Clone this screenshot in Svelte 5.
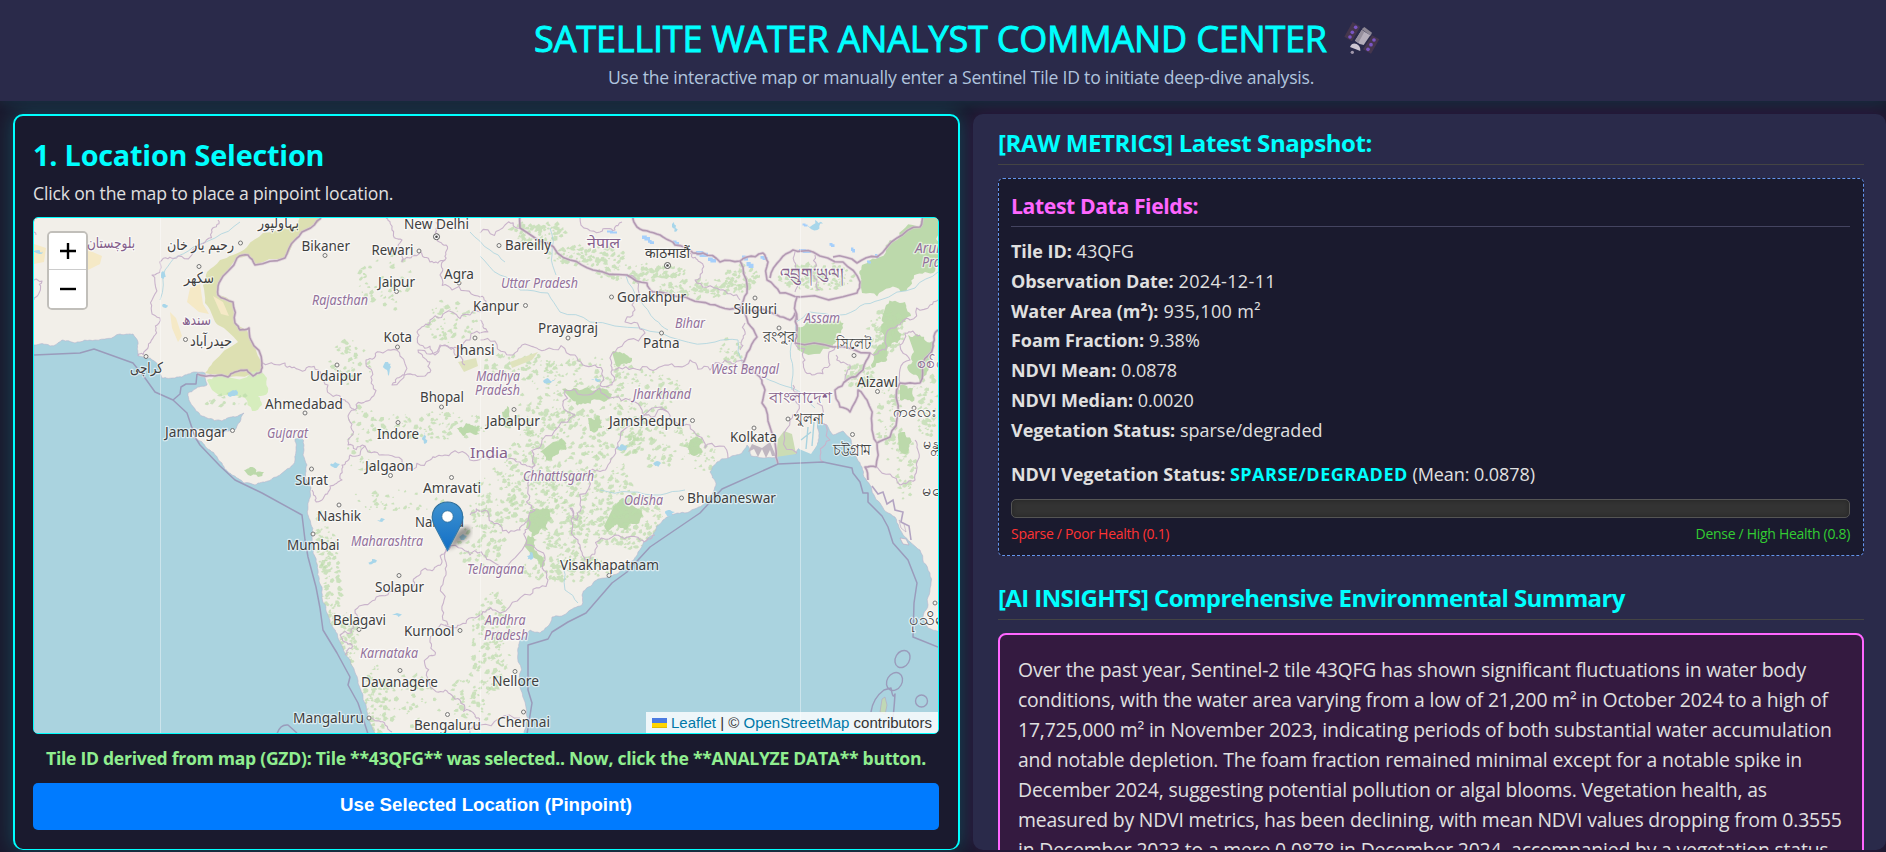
<script>
  const fields = [
    { label: 'Tile ID', value: '43QFG', ls: 0.1 },
    { label: 'Observation Date', value: '2024-12-11', ls: 0.35 },
    { label: 'Water Area (m²)', value: '935,100 m²', ls: 0.35 },
    { label: 'Foam Fraction', value: '9.38%', ls: 0.1 },
    { label: 'NDVI Mean', value: '0.0878', ls: 0 },
    { label: 'NDVI Median', value: '0.0020', ls: 0 },
    { label: 'Vegetation Status', value: 'sparse/degraded', ls: 0 },
  ]

  const summary = [
    'Over the past year, Sentinel-2 tile 43QFG has shown significant fluctuations in water body',
    'conditions, with the water area varying from a low of 21,200 m² in October 2024 to a high of',
    '17,725,000 m² in November 2023, indicating periods of both substantial water accumulation',
    'and notable depletion. The foam fraction remained minimal except for a notable spike in',
    'December 2024, suggesting potential pollution or algal blooms. Vegetation health, as',
    'measured by NDVI metrics, has been declining, with mean NDVI values dropping from 0.3555',
    'in December 2023 to a mere 0.0878 in December 2024, accompanied by a vegetation status',
  ]

  // name, left, right, baseline, dot x, dot y
  const cities = [
    ['New Delhi', 404, 469, 229],
    ['Bikaner', 301.5, 350, 251, 325, 255.5],
    ['Rewari', 371.5, 413.5, 255, 419, 251],
    ['Jaipur', 378, 415, 287, 396.5, 291.5],
    ['Agra', 444, 474, 279, 459, 283],
    ['Kota', 383.5, 412, 342, 397.5, 347],
    ['رحیم یار خان', 167, 234, 250, 240.5, 243],
    ['سکھر', 184, 214, 283, 199, 266.5],
    ['حیدرآباد', 190, 232, 346, 185.5, 339.5],
    ['بہاولپور', 258, 299, 228],
    ['کراچی', 130, 163, 373, 146, 356.5],
    ['Kanpur', 473, 519, 310.5, 525.5, 305.5],
    ['Jhansi', 456, 494.5, 355, 475, 338],
    ['Bareilly', 505, 551, 250, 499, 245.5],
    ['काठमाडौं', 645, 690, 258],
    ['Gorakhpur', 617, 686, 302, 611.5, 297],
    ['Siliguri', 733.5, 777, 313.5, 755, 298],
    ['Prayagraj', 538, 598, 333, 568, 338],
    ['রংপুর', 763, 795, 342, 779, 328],
    ['সিলেট', 836, 871, 349, 854, 355.5],
    ['Patna', 643, 679.5, 348, 661.5, 333],
    ['Aizawl', 857, 898, 386.5, 877.5, 391.5],
    ['খুলনা', 794, 824, 424, 788, 419],
    ['Jabalpur', 486, 540, 426, 514, 409.5],
    ['Jamshedpur', 609, 687, 426, 692.5, 420.5],
    ['Kolkata', 730, 777, 442, 754, 428],
    ['চট্টগ্রাম', 833, 871, 455, 852.5, 434.5],
    ['ကလေး', 893, 936, 417, 914, 408],
    ['မန္တလေး', 923, 966, 449],
    ['မကွေး', 922, 962, 496],
    ['ပုသိမ်', 909, 945, 625, 935, 603],
    ['Udaipur', 310, 362, 381, 337, 365],
    ['Ahmedabad', 265, 343, 409, 305, 413],
    ['Bhopal', 420, 464, 402, 441.5, 407],
    ['Jamnagar', 165, 227, 437, 232.5, 430.5],
    ['Indore', 377, 419, 439, 398, 422.5],
    ['Jalgaon', 365, 413.5, 471, 390.5, 475.5],
    ['Surat', 295, 328, 485, 311.5, 469],
    ['Amravati', 423, 481, 493, 451.5, 477.5],
    ['Nashik', 317, 361, 520.5, 339, 505],
    ['Nanded', 415, 464, 527],
    ['Mumbai', 287, 339.5, 550, 313, 534],
    ['Solapur', 375, 424, 592, 399, 575.5],
    ['Bhubaneswar', 687, 776, 503, 681.5, 498],
    ['Visakhapatnam', 560, 659, 570, 609, 575.5],
    ['Nellore', 492, 539, 686, 515, 671.5],
    ['Chennai', 497, 550, 727, 523.5, 712],
    ['Belagavi', 333, 386, 625, 359, 629.5],
    ['Kurnool', 404, 454.5, 635.5, 460, 630.5],
    ['Davanagere', 361, 438, 686.5, 400, 670.5],
    ['Mangaluru', 293, 364, 723, 369, 718],
    ['Bengaluru', 414, 481, 730, 447.5, 714.5],
  ]

  const capitals = [[436.5, 236.7], [667.5, 265.5]]

  const states = [
    ['Rajasthan', 312, 368, 305],
    ['Uttar Pradesh', 501, 578, 288],
    ['Bihar', 675, 705, 328],
    ['Assam', 804, 840, 323],
    ['West Bengal', 711, 779, 374],
    ['Madhya', 476, 520, 381],
    ['Pradesh', 475, 520, 395],
    ['Jharkhand', 633, 691, 399],
    ['Gujarat', 267, 308, 438],
    ['Maharashtra', 351, 423, 546],
    ['Telangana', 467, 524, 574],
    ['Chhattisgarh', 523, 594, 481],
    ['Odisha', 624, 663, 505],
    ['Andhra', 485, 525.5, 625],
    ['Pradesh', 484, 528, 640],
    ['Karnataka', 360, 418, 658],
    ['Arunachal', 915, 978, 253],
    ['Pradesh', 922, 967, 267],
  ]

  const regions = [
    ['بلوچستان', 87, 135, 248],
    ['سندھ', 182, 211, 325],
    ['नेपाल', 587, 620, 248],
    ['འབྲུག་ཡུལ།', 780, 843, 279],
    ['বাংলাদেশ', 769, 832, 403],
    ['India', 470, 508, 458],
    ['စစ်ကိုင်း', 917, 965, 368],
  ]

  let seed = 7
  function rnd() {
    seed = (seed * 16807) % 2147483647
    return seed / 2147483647
  }

  // splits every segment a few times and pushes the midpoints sideways
  function rough(str, amp = 0.16, depth = 3, close = false) {
    let pts = str.split(' ').map((p) => p.split(',').map(Number))
    for (let d = 0; d < depth; d++) {
      const out = []
      for (let i = 0; i < pts.length - 1; i++) {
        const [x1, y1] = pts[i]
        const [x2, y2] = pts[i + 1]
        const len = Math.hypot(x2 - x1, y2 - y1)
        out.push(pts[i])
        if (len > 3) {
          const k = (rnd() - 0.5) * 2 * amp
          out.push([(x1 + x2) / 2 - (y2 - y1) * k, (y1 + y2) / 2 + (x2 - x1) * k])
        }
      }
      out.push(pts[pts.length - 1])
      pts = out
    }
    return 'M' + pts.map(([x, y]) => x.toFixed(1) + ' ' + y.toFixed(1)).join('L') + (close ? 'Z' : '')
  }

  const westCoast = '34,345 50,346 62,340 75,343 95,340 120,334 133,334 138,342 138,356 150,358 160,365 162,378 175,378 188,374 196,372 205,373 207,385 195,389 188,393 190,402 196,411 207,418 222,421 235,417 244,413 240,422 235,430 222,433 205,430 188,431 198,440 210,450 222,463 232,475 244,483 255,485 268,481 281,474 290,468 295,460 296,447 295,439 301,436 304,445 303,455 307,465 305,478 311,488 308,503 310,520 312,537 313,553 318,570 322,587 326,607 330,623 338,638 345,653 353,667 358,683 363,697 368,717 376,736'
  const eastCoast = '524,736 525,702 520,687 518,653 520,640 530,630 540,633 547,627 552,617 567,613 582,605 582,595 593,583 608,577 627,565 638,552 653,535 663,520 677,513 697,508 708,498 716,483 710,472 717,462 728,458 742,453 747,445 751,456 763,458 776,457 782,452 796,454 800,447 813,451 819,438 817,420 827,425 833,435 843,431 850,438 853,450 862,467 870,485 880,503 895,517 905,537 920,550 930,573 928,597 923,617 928,628 940,632'
  const seas = [
    rough(westCoast, 0.12) + 'L34 736Z',
    rough(eastCoast, 0.12) + 'L940 736Z',
  ]

  const desert = rough('322,218 302,232 295,240 285,258 255,265 248,255 237,258 218,285 218,295 233,302 235,323 247,330 262,363 261,372 228,377 205,373 213,362 238,342 218,325 213,317 205,303 203,285 207,272 220,260 233,255 247,247 263,233 297,225 300,216', 0.08, 2, true)
  const marsh = rough('207,380 215,376 232,378 260,371 267,378 268,392 258,396 262,405 252,411 245,398 232,393 222,396 212,390', 0.2, 2, true)

  const forests = [
    '860,282 862,265 880,257 897,240 920,228 925,216 940,216 940,262 925,272 910,286 890,288 862,293',
    '797,327 806,323 822,325 840,320 843,328 836,335 833,346 797,343',
    '562,389 585,388 605,389 612,394 604,402 585,404 572,400',
    '612,352 624,353 632,358 630,363 616,366',
    '908,335 920,335 934,341 932,350 930,365 920,383 908,370 914,352',
    '900,385 916,386 912,402 900,400',
    '886,305 905,302 911,316 898,325 902,334 888,347 883,362 872,368 878,346 884,335 882,318',
    '530,510 543,508 552,518 548,530 540,530 532,540 526,528',
    '614,506 622,498 636,508 643,516 634,524 625,530 617,524 608,532 604,526',
    '528,535 537,540 539,555 545,564 540,568 530,555 524,546',
    '457,428 466,423 480,426 478,434 463,436',
    '690,440 702,438 703,452 694,456 688,448',
    '553,442 562,438 566,450 556,455 546,460 540,452',
    '502,412 507,406 513,420 511,428 504,426',
    '898,437 905,432 911,440 908,453 899,450',
    '588,418 600,416 602,428 590,431',
    '244,470 250,467 264,472 258,477 248,475',
  ].map((p) => rough(p, 0.28, 3, true))

  // cx, cy, rx, ry, count
  const clusters = [
    [535, 232, 28, 12, 90], [585, 255, 40, 10, 90], [640, 272, 45, 9, 110], [700, 288, 45, 9, 100],
    [815, 276, 38, 14, 150], [740, 275, 18, 14, 50], [885, 330, 18, 22, 90], [858, 375, 16, 12, 60],
    [450, 320, 25, 22, 60], [385, 280, 28, 30, 50], [350, 360, 22, 24, 45], [430, 425, 60, 14, 90],
    [520, 365, 40, 12, 60], [580, 375, 60, 18, 90], [640, 390, 40, 22, 90], [545, 410, 30, 30, 90],
    [600, 430, 55, 28, 160], [530, 480, 28, 50, 200], [590, 490, 45, 40, 200], [625, 520, 40, 28, 190],
    [565, 530, 25, 28, 100], [565, 568, 45, 14, 110], [490, 500, 22, 32, 90], [480, 545, 25, 22, 60],
    [660, 445, 40, 22, 90], [700, 450, 18, 20, 40], [395, 500, 50, 12, 35], [330, 580, 9, 50, 90],
    [348, 640, 9, 30, 80], [375, 700, 12, 36, 110], [410, 700, 30, 26, 50], [490, 640, 20, 50, 140],
    [470, 700, 22, 28, 60], [320, 540, 8, 30, 40], [888, 420, 12, 40, 70], [925, 400, 10, 40, 60],
    [905, 470, 10, 30, 40], [360, 440, 15, 40, 40], [225, 400, 22, 9, 14], [730, 350, 12, 14, 30],
  ]
  const speckles = clusters.map(([cx, cy, rx, ry, n]) => {
    let d = ''
    for (let i = 0; i < n; i++) {
      const a = rnd() * 6.283
      const r = Math.sqrt(rnd())
      const x = cx + Math.cos(a) * rx * r
      const y = cy + Math.sin(a) * ry * r
      const s = 0.8 + rnd() * 2.3
      d += `M${x.toFixed(1)} ${y.toFixed(1)}l${s.toFixed(1)} ${(-s * rnd()).toFixed(1)}l${(s * rnd()).toFixed(1)} ${s.toFixed(1)}l${(-s * 0.8).toFixed(1)} ${(s * rnd()).toFixed(1)}l${(-s).toFixed(1)} ${(-s * 0.3).toFixed(1)}z`
    }
    return d
  })

  const rivers = [
    '480,256 500,275 520,290 548,293 560,312 590,322 640,328 680,340 715,342 738,340 742,362',
    '626,276 640,300 655,320 668,330',
    '938,272 915,288 880,300 860,306 840,315 810,312 796,322 791,345 793,370 792,390',
    '550,228 552,255 556,275',
    '160,300 165,270 178,256 198,245 215,238 240,222',
    '765,378 785,386 800,392 815,408',
    '560,560 565,590 578,603', '600,490 630,492 660,495 685,490',
    '470,232 490,250 505,262',
  ].map((p) => rough(p, 0.1, 2))

  const lakes = [
    [163, 275, 2, 4], [165, 306, 3, 2], [388, 369, 3, 7], [424, 438, 2, 6], [335, 465, 5, 3], [381, 520, 4, 2],
    [622, 447, 6, 3], [657, 464, 4, 3], [670, 513, 5, 3], [549, 381, 6, 2], [596, 380, 5, 2], [674, 227, 2, 5],
    [815, 225, 8, 5], [372, 561, 5, 2], [397, 615, 5, 2], [463, 537, 4, 3], [233, 393, 5, 3], [530, 556, 3, 4], [38, 252, 5, 2],
  ]
  const glaciers = [
    [612, 232, 10, 3], [646, 238, 8, 5], [651, 242, 6, 4], [676, 243, 6, 5], [702, 254, 12, 6], [712, 260, 8, 5],
    [745, 258, 6, 5], [750, 265, 7, 6], [764, 258, 7, 4], [805, 251, 12, 4], [805, 225, 5, 3], [832, 245, 5, 4],
    [853, 250, 4, 5], [869, 262, 4, 3], [877, 256, 4, 4],
  ]

  const stateLines = [
    '198,245 178,256 162,260 152,275 152,300 160,318 155,335 146,350 138,356',
    '198,245 212,232 218,220', '34,280 42,281 38,295 34,300', '34,232 36,235',
    '386,218 392,230 402,240 402,262 412,256 420,252 430,262 445,260 446,245 438,235 436,222',
    '445,260 440,275 452,290 478,296 488,306 470,315 452,312 430,320 417,332 420,345 435,355 445,345 470,340 488,332 480,320',
    '263,363 285,363 300,370 318,370 328,385 345,400 355,410 352,430 348,445 365,446 350,455 342,465 342,480 330,486 322,500 315,500 312,490',
    '355,410 370,400 372,380 366,360 380,352 400,356 392,385 405,375 425,376 430,362 418,350 440,345 455,355 465,365',
    '480,340 505,352 522,345 545,350 575,355 595,365 600,385 612,385 612,370 615,352 645,333 625,322 632,305 627,276',
    '612,370 640,370 665,365 690,360 710,370 725,360 745,362',
    '365,446 385,455 405,470 430,460 445,455 470,460 495,455 520,462 535,465 542,440 575,415 565,390 600,388',
    '600,388 630,400 645,415 668,412 690,425 705,448 728,458',
    '668,412 620,440 608,465 590,470 580,505 577,520 570,508 578,540 585,560 595,550 615,535 640,540 655,535',
    '535,465 528,490 535,510 525,530 525,545 545,560 548,580 530,595 495,610 480,615 460,625 445,625',
    '448,550 442,562 430,570 415,578 412,590 395,592 375,600 355,610 355,622 340,635 352,645 345,655',
    '448,550 446,575 444,600 448,625 430,640 435,655 425,665 430,685 445,690 460,700 475,715 480,725 520,718',
    '470,515 485,510 500,525 520,530 528,520', '445,550 470,555 490,560 525,545',
    '372,718 385,725 392,732', '480,725 470,733',
    '690,253 700,262 695,280 720,290 740,300', '745,323 742,340 740,350', '580,218 600,232 615,230 622,222',
    '480,233 505,225 520,228', '795,343 805,360 812,375 830,365 835,347', '870,353 885,350 898,325 910,320 930,305 938,300',
    '900,383 910,360 900,345 905,333 920,335', '845,380 850,365 836,355', '793,385 795,400 790,420 797,453',
    '817,403 830,440 823,462', '877,467 900,485 915,480 918,460 915,440', '815,255 812,275 820,290', '795,252 800,275 795,292',
  ].map((p) => rough(p, 0.3))

  const borders = [
    '322,216 317,221 302,232 295,240 285,258 255,265 248,255 237,258 219,283 218,295 233,302 235,323 240,330 249,328 251,340 262,363 261,372 253,376 247,370 235,372 228,377 215,376 197,374',
    '633,216 637,227 650,232 663,237 675,245 693,253 703,253 720,262 740,261 747,257 763,253 768,262 767,280 780,293 800,297 857,293 860,282 843,262 813,252 793,250 780,260 770,278',
    '833,257 857,263 877,257 897,238 920,227 923,216',
    '520,216 520,228 547,243 570,260 593,270 627,275 647,283 653,292 680,297 700,302 720,307 740,308 747,293 743,267 740,261',
    '740,308 748,323 757,337 747,353 743,367 760,377 765,390 762,403 770,427 776,450 778,464',
    '748,310 777,315 790,320 795,313 797,330 795,343 833,347 870,353 863,370 847,380 835,390 840,407 850,412 858,390 867,400 872,425 877,443 876,467 865,467 868,480',
    '877,443 890,437 898,413 900,383 920,383 923,363 933,347 935,333 938,330',
    '797,297 797,320',
  ].map((p) => rough(p, 0.12, 2))

  const maritime = [
    'M34 355L80 353L94 349L133 363L145 378L155 392L173 400L187 413L195 437L200 445L220 466L235 480L262 493L302 515L305 540L308 557L316 587L320 608L323 630L337 653L350 677L348 685L358 703L361 712L368 734',
    'M173 400L180 394L181 387L186 384L196 384L197 374',
    'M277 734Q280 724 288 725L297 733',
    'M527 734L532 703L528 690L528 645L548 639L552 632L568 622L586 613L612 583L627 572L650 547L700 513L722 489L778 464L823 462L852 468L853 473L860 482L863 493L868 493L868 502L882 516L888 527L893 543L908 560L917 583L914 603L913 637L938 647',
    'M871 712Q873 698 884 690L891 688Q893 700 895 694Q894 712 891 734',
  ]
</script>

<div class="page">
  <header>
    <h1>
      <span>SATELLITE WATER ANALYST COMMAND CENTER</span>
      <svg width="38" height="36" viewBox="66 32 114 108" aria-hidden="true">
        <path fill="#45364d" d="M95 38l23 14-25 44-23-14zM153 78l22 12-25 43-24-13z" />
        <g fill="#7a55c4">
          <circle cx="104" cy="54" r="5.5" /><circle cx="94" cy="69" r="5.5" /><circle cx="87" cy="83" r="5.5" />
          <circle cx="159" cy="92" r="5.5" /><circle cx="150" cy="106" r="5.5" /><circle cx="141" cy="120" r="5.5" />
        </g>
        <path fill="#8d8794" d="M122 60l8-7 23 17-4 9z" />
        <path fill="#b5aebb" d="M122 62l26 16-20 29q-14-2-26-13z" />
        <path fill="#968f9d" d="M122 62l8 5-18 34-10-7z" />
        <path fill="#cdc6d1" d="M87 113q6-14 20-9 12 6 11 21z" />
        <circle cx="94" cy="129" r="5" fill="#a097ab" />
      </svg>
    </h1>
    <p>Use the interactive map or manually enter a Sentinel Tile ID to initiate deep-dive analysis.</p>
  </header>

  <main>
    <section class="panel location">
      <h2>1. Location Selection</h2>
      <p class="hint">Click on the map to place a pinpoint location.</p>

      <div class="map">
        <svg class="tiles" viewBox="34 218 904 515" preserveAspectRatio="none">
          <rect x="34" y="218" width="904" height="515" fill="#f2efe9" />
          <path d={desert} fill="#dde0b2" />
          <path d={marsh} fill="#d6edbd" />
          <g fill="#f5e9c6">
            <path d="M190 288l10-4 3 20 6 10-10-2-12-10zM88 250l14 6-2 8-12 6zM170 312l6 6 6 18-4 6-6-14z" />
            <path d="M213 296l10 6 6 14-8-2zM34 244l12 4-2 14-10 2z" />
          </g>
          {#each forests as d}
            <path {d} fill="#bcd9ab" />
          {/each}
          {#each speckles as d}
            <path {d} fill="#bbdba9" opacity="0.7" />
          {/each}
          <path d="M458 362l18-4 2 8-14 6zM510 362l28-10-6 8-20 8z" fill="#dfe3bd" />
          {#each rivers as d}
            <path {d} fill="none" stroke="#aad3df" stroke-width="1" opacity="0.8" />
          {/each}
          {#each seas as d}
            <path {d} fill="#aad3df" stroke="#b8b5cc" stroke-width="0.6" />
          {/each}
          <path d="M776 457l2-18 6-8 8 3 4 20z" fill="#cbdcb4" />
          <path d="M748 452l4-8 10 4 8-6 6 14-4 0-2-6-4 8-4-9-4 8-4-8z" fill="#bfb6c0" />
          <path d="M799 449l0-22 14-14 4 10 0 22-6 9z" fill="#f2efe9" />
          <path d="M806 449l2-22M812 446l2-24M801 440l10-8" stroke="#aad3df" stroke-width="1.4" fill="none" />
          <path d="M900 538l6 1 3 6-6-1zM899 520l5 4 2 8-5-4z" fill="#f2efe9" stroke="#b5a3c0" stroke-width="0.6" />
          <path d="M872 486l6 8 5-2 4 12 6-4 2 10 8 2-2 10 8 4 2 14" fill="none" stroke="#b3a4c2" stroke-width="1.6" />
          {#each lakes as [cx, cy, rx, ry]}
            <path d={rough(`${cx - rx},${cy} ${cx},${cy - ry} ${cx + rx},${cy - ry * 0.3} ${cx + rx * 0.3},${cy + ry} ${cx - rx},${cy}`, 0.4, 2, true)} fill="#a8d6ea" />
          {/each}
          {#each glaciers as [x, y, w, h]}
            <path d="M{x - w / 2} {y - h / 2}h{w * 0.6}v{h * 0.3}h{w * 0.4}v{h * 0.7}h{-w * 0.7}v{-h * 0.3}h{-w * 0.3}z" fill="#a5cffb" />
          {/each}
          <g fill="none" stroke-linejoin="round">
            {#each stateLines as d}
              <path {d} stroke="#c9b3cb" stroke-width="1.1" />
            {/each}
            {#each borders as d}
              <path {d} stroke="#d9c6d6" stroke-width="3.2" opacity="0.6" />
              <path {d} stroke="#b39ab3" stroke-width="1.6" />
            {/each}
            {#each maritime as d}
              <path {d} stroke="#9a9bbb" stroke-width="1.5" />
            {/each}
            <g stroke="#9a9bbb" stroke-width="1.4">
              <ellipse cx="902.5" cy="659" rx="7" ry="9" transform="rotate(30 902.5 659)" />
              <ellipse cx="894.5" cy="681.5" rx="7.5" ry="9.5" transform="rotate(30 894.5 681.5)" />
              <circle cx="921.5" cy="701" r="6" />
            </g>
          </g>
          <path d="M882 699l3-2 2 8-2 10-5-3z" fill="#c0d8b5" stroke="#b3a4c2" stroke-width="0.6" />
          <g stroke="#fff" stroke-width="1" opacity="0.4">
            <path d="M160.5 218v515M480.5 218v515M800.5 218v515" />
          </g>

          <g fill="#f7f5f1" stroke="#777" stroke-width="1">
            {#each cities as [, , , , x, y]}
              {#if x}
                <circle cx={x} cy={y} r="2" />
              {/if}
            {/each}
          </g>
          {#each capitals as [x, y]}
            <circle cx={x} cy={y} r="3" fill="#fff" stroke="#555" />
            <circle cx={x} cy={y} r="1.3" fill="#444" />
          {/each}
          {#each states as [name, x1, x2, y]}
            <text class="state" x={x1} {y} textLength={x2 - x1} lengthAdjust="spacingAndGlyphs">{name}</text>
          {/each}
          {#each regions as [name, x1, x2, y]}
            <text class="region" x={x1} {y} textLength={x2 - x1} lengthAdjust="spacingAndGlyphs">{name}</text>
          {/each}
          {#each cities as [name, x1, x2, y]}
            <text class="city" x={x1} {y} textLength={x2 - x1} lengthAdjust="spacingAndGlyphs">{name}</text>
          {/each}
        </svg>

        <svg class="marker" width="64" height="54" viewBox="0 0 64 54">
          <defs>
            <linearGradient id="pin" x1="0" y1="0" x2="0" y2="1">
              <stop offset="0" stop-color="#3f92cf" />
              <stop offset="1" stop-color="#126fc6" />
            </linearGradient>
            <linearGradient id="pinEdge" x1="0" y1="0" x2="0" y2="1">
              <stop offset="0" stop-color="#2e6c97" />
              <stop offset="1" stop-color="#3883b7" />
            </linearGradient>
            <filter id="soft"><feGaussianBlur stdDeviation="2" /></filter>
          </defs>
          <path d="M17 49L24 33Q31 24 38 26Q42 32 35 38Z" fill="#000" opacity="0.36" filter="url(#soft)" />
          <path
            d="M16.5 1C7.5 1 1.2 7.8 1.2 16C1.2 20.5 3 23.800 5 27.5L16.5 49.5L28 27.5C30 23.8 31.8 20.5 31.8 16C31.8 7.8 25.5 1 16.5 1Z"
            fill="url(#pin)"
            stroke="url(#pinEdge)"
            stroke-width="1.2"
          />
          <circle cx="16.5" cy="15.5" r="5.7" fill="#fff" stroke="#2e6c97" stroke-width="0.8" />
        </svg>

        <div class="zoom">
          <button type="button" aria-label="Zoom in">
            <svg width="18" height="18" viewBox="0 0 18 18"><path d="M1 9h16M9 1v16" stroke="#000" stroke-width="2.4" /></svg>
          </button>
          <button type="button" aria-label="Zoom out">
            <svg width="18" height="18" viewBox="0 0 18 18"><path d="M1 9h16" stroke="#000" stroke-width="2.4" /></svg>
          </button>
        </div>

        <div class="attribution">
          <svg width="15" height="10" viewBox="0 0 15 10">
            <path fill="#4c7be1" d="M0 0h15v5H0z" />
            <path fill="#ffd500" d="M0 5h15v4H0z" />
            <path fill="#e0bc00" d="M0 9h15v1H0z" />
          </svg>
          <span><a href="#leaflet">Leaflet</a> | © <a href="#osm">OpenStreetMap</a> contributors</span>
        </div>
      </div>

      <p class="status">Tile ID derived from map (GZD): Tile **43QFG** was selected.. Now, click the **ANALYZE DATA** button.</p>
      <button class="use" type="button">Use Selected Location (Pinpoint)</button>
    </section>

    <section class="panel results">
      <h3>[RAW METRICS] Latest Snapshot:</h3>
      <div class="metrics">
        <h4>Latest Data Fields:</h4>
        {#each fields as f}
          <p style:letter-spacing="{f.ls}px"><strong>{f.label}:</strong> {f.value}</p>
        {/each}
        <p class="ndvi"><strong>NDVI Vegetation Status: <span>SPARSE/DEGRADED</span></strong> (Mean: 0.0878)</p>
        <div class="bar"></div>
        <div class="scale">
          <span class="poor">Sparse / Poor Health (0.1)</span>
          <span class="dense">Dense / High Health (0.8)</span>
        </div>
      </div>

      <h3 class="ai">[AI INSIGHTS] Comprehensive Environmental Summary</h3>
      <div class="summary">
        {#each summary as line}
          <p>{line}</p>
        {/each}
      </div>
    </section>
  </main>
</div>

<style>
  :global(body) {
    margin: 0;
    background: #1a1a2e;
    overflow: hidden;
  }
  .page {
    display: flex;
    flex-direction: column;
    height: 852px;
    overflow: hidden;
    color: #e0e0e0;
    font-family: 'Open Sans', 'Noto Sans', sans-serif;
    font-size: 17.6px;
  }
  h1, h2, h3, h4, p {
    margin: 0;
  }
  header {
    position: relative;
    z-index: 2;
    box-sizing: border-box;
    flex: none;
    height: 101px;
    padding-top: 13px;
    background: #2a2a4a;
    box-shadow: 0 4px 12px rgba(0, 255, 255, 0.08);
    text-align: center;
  }
  h1 {
    display: flex;
    justify-content: center;
    align-items: center;
    gap: 16px;
    padding-left: 29px;
    height: 50px;
    color: #00ffff;
    font-size: 36px;
    font-weight: 400;
    letter-spacing: -0.18px;
    white-space: nowrap;
    -webkit-text-stroke: 0.9px #00ffff;
  }
  header p {
    padding-left: 36px;
    line-height: 28px;
    color: #b0c4de;
    letter-spacing: -0.23px;
  }
  main {
    display: flex;
    gap: 13px;
    padding: 13px 0 2px 13px;
    height: 736px;
  }
  .panel {
    box-sizing: border-box;
    height: 736px;
    border-radius: 10px;
  }
  .location {
    display: flex;
    flex-direction: column;
    flex: none;
    width: 947px;
    padding: 16px 19px 0 18px;
    border: 2px solid #00ffff;
    border-bottom-width: 1px;
    background: #1a1a2e;
    box-shadow: 0 0 19px rgba(0, 255, 255, 0.2);
  }
  h2 {
    line-height: 46px;
    color: #00ffff;
    font-size: 28.8px;
    letter-spacing: -0.2px;
  }
  .hint {
    line-height: 30px;
    margin-bottom: 9px;
    letter-spacing: -0.17px;
  }
  .map {
    position: relative;
    box-sizing: border-box;
    height: 517px;
    border: 1px solid #00ffff;
    border-radius: 5px;
    overflow: hidden;
  }
  .tiles {
    display: block;
    width: 100%;
    height: 100%;
  }
  .tiles text {
    font-family: 'Noto Sans', 'DejaVu Sans', sans-serif;
    font-size: 15px;
    paint-order: stroke;
    stroke: rgba(255, 255, 255, 0.6);
    stroke-width: 2.5px;
    stroke-linejoin: round;
  }
  .city {
    fill: #3f3f3f;
  }
  .tiles .state {
    fill: #93719b;
    font-size: 13.5px;
    font-style: italic;
  }
  .region {
    fill: #85608c;
  }
  .marker {
    position: absolute;
    left: 397px;
    top: 283px;
  }
  .zoom {
    position: absolute;
    left: 13px;
    top: 13px;
    width: 37px;
    border: 2px solid rgba(0, 0, 0, 0.2);
    border-radius: 5px;
    background-clip: padding-box;
  }
  .zoom button {
    display: flex;
    align-items: center;
    justify-content: center;
    width: 37px;
    height: 38px;
    padding: 0;
    border: 0;
    border-radius: 0 0 3px 3px;
    background: #fff;
  }
  .zoom button:first-child {
    height: 37px;
    border-bottom: 1px solid #ccc;
    border-radius: 3px 3px 0 0;
  }
  .attribution {
    position: absolute;
    right: 0;
    bottom: 0;
    display: flex;
    align-items: center;
    gap: 4px;
    box-sizing: border-box;
    width: 292px;
    height: 21px;
    padding-left: 6px;
    background: rgba(255, 255, 255, 0.8);
    color: #333;
    font: 15px 'Liberation Sans', Arial, sans-serif;
    white-space: nowrap;
  }
  .attribution a {
    color: #0078a8;
    text-decoration: none;
  }
  .status {
    margin: 9px 0 10px;
    line-height: 30px;
    color: #90ee90;
    font-weight: 700;
    text-align: center;
    letter-spacing: -0.29px;
    white-space: nowrap;
  }
  .use {
    height: 47px;
    padding: 0 0 3px;
    border: 0;
    border-radius: 5px;
    background: #007bff;
    color: #fff;
    font: bold 18.7px 'Liberation Sans', Arial, sans-serif;
  }
  .results {
    flex: 1;
    position: relative;
    padding: 12px 22px 0 25px;
    background: #2a2a4a;
    box-shadow: 0 0 20px rgba(255, 0, 255, 0.1);
    overflow: hidden;
  }
  h3 {
    padding-bottom: 4px;
    margin-bottom: 13px;
    border-bottom: 1px solid #444;
    line-height: 34px;
    color: #00ffff;
    font-size: 24px;
    letter-spacing: -0.4px;
  }
  .metrics {
    padding: 12px 13px 11px 12px;
    border: 1px dashed #6495ed;
    border-radius: 5px;
    background: #1a1a2e;
    font-size: 18px;
  }
  h4 {
    padding-bottom: 5px;
    margin-bottom: 10px;
    border-bottom: 1px solid #444460;
    line-height: 30px;
    color: #ff66ff;
    font-size: 21.2px;
    letter-spacing: -0.4px;
  }
  .metrics p {
    line-height: 29.8px;
  }
  .metrics strong {
    letter-spacing: -0.05px;
  }
  .metrics .ndvi {
    margin: 14px 0 10px;
    letter-spacing: -0.07px;
  }
  .ndvi span {
    color: #00ffff;
    letter-spacing: 0.5px;
  }
  .bar {
    box-sizing: border-box;
    height: 19px;
    border: 1px solid #555;
    border-radius: 5px;
    background: #333;
    box-shadow: inset 0 0 5px rgba(0, 0, 0, 0.3);
  }
  .scale {
    display: flex;
    justify-content: space-between;
    margin-top: 6px;
    line-height: 20px;
    font-size: 14px;
    letter-spacing: -0.3px;
  }
  .poor {
    color: #ff3333;
  }
  .dense {
    color: #33cc33;
  }
  .ai {
    margin-top: 25px;
    letter-spacing: -0.6px;
  }
  .summary {
    padding: 19.5px 18px 30px;
    border: 2px solid #ff66ff;
    border-radius: 8px;
    background: #341a40;
    font-size: 19.36px;
    white-space: nowrap;
    letter-spacing: -0.17px;
  }
  .summary p {
    line-height: 30px;
  }
</style>
